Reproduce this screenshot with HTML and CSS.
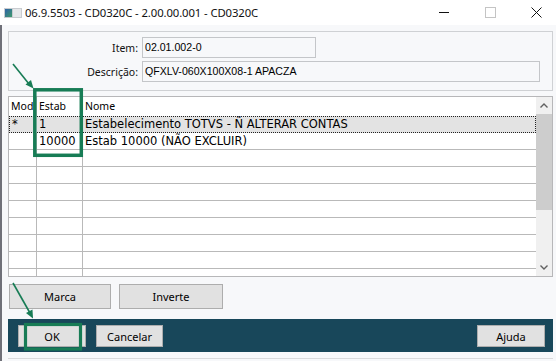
FILE: index.html
```html
<!DOCTYPE html>
<html lang="pt">
<head>
    <meta charset="UTF-8">
    <meta name="viewport" content="width=device-width, initial-scale=1.0">
    <title>CD0320C</title>
    <link rel="stylesheet" href="styles.css">
</head>
<body>
<div class="window">

    <!-- Title bar -->
    <div class="titlebar">
        <svg class="app-icon" width="18" height="10" viewBox="0 0 18 10">
            <defs>
                <linearGradient id="ig" x1="0" y1="0" x2="1" y2="1">
                    <stop offset="0" stop-color="#2f62a8"/>
                    <stop offset="1" stop-color="#3f9a6a"/>
                </linearGradient>
            </defs>
            <rect x="0" y="0" width="18" height="10" fill="#c9ccd0"/>
            <rect x="1" y="1" width="7" height="8" fill="url(#ig)"/>
            <rect x="9" y="1" width="8" height="8" fill="#e6e8ea"/>
        </svg>
        <span class="title">06.9.5503 - CD0320C - 2.00.00.001 - CD0320C</span>
        <div class="controls">
            <svg class="ctl-min" width="11" height="11" viewBox="0 0 11 11"><path d="M0 5.5H10" stroke="#111" stroke-width="1"/></svg>
            <svg class="ctl-max" width="11" height="11" viewBox="0 0 11 11"><rect x="0.5" y="0.5" width="10" height="10" fill="none" stroke="#c4c4c4"/></svg>
            <svg class="ctl-close" width="11" height="11" viewBox="0 0 11 11"><path d="M0.5 0.5L10.5 10.5M10.5 0.5L0.5 10.5" stroke="#111" stroke-width="1"/></svg>
        </div>
    </div>

    <div class="client">
        <!-- Item fields -->
        <div class="fields">
            <label class="field-label">Item:</label>
            <div class="input input-short">02.01.002-0</div>
            <label class="field-label">Descrição:</label>
            <div class="input input-long">QFXLV-060X100X08-1 APACZA</div>
        </div>

        <!-- Browse grid -->
        <div class="grid">
            <div class="grid-main">
                <div class="grid-row head">
                    <div class="cell mod">Mod</div>
                    <div class="cell estab">Estab</div>
                    <div class="cell nome">Nome</div>
                </div>
                <div class="grid-row selected">
                    <div class="cell mod">*</div>
                    <div class="cell estab">1</div>
                    <div class="cell nome">Estabelecimento TOTVS - Ñ ALTERAR CONTAS</div>
                </div>
                <div class="grid-row">
                    <div class="cell mod"></div>
                    <div class="cell estab">10000</div>
                    <div class="cell nome">Estab 10000 (NÃO EXCLUIR)</div>
                </div>
                <div class="grid-row"><div class="cell mod"></div><div class="cell estab"></div><div class="cell nome"></div></div>
                <div class="grid-row"><div class="cell mod"></div><div class="cell estab"></div><div class="cell nome"></div></div>
                <div class="grid-row"><div class="cell mod"></div><div class="cell estab"></div><div class="cell nome"></div></div>
                <div class="grid-row"><div class="cell mod"></div><div class="cell estab"></div><div class="cell nome"></div></div>
                <div class="grid-row"><div class="cell mod"></div><div class="cell estab"></div><div class="cell nome"></div></div>
                <div class="grid-row"><div class="cell mod"></div><div class="cell estab"></div><div class="cell nome"></div></div>
                <div class="grid-row"><div class="cell mod"></div><div class="cell estab"></div><div class="cell nome"></div></div>
                <div class="grid-row"><div class="cell mod"></div><div class="cell estab"></div><div class="cell nome"></div></div>
            </div>
            <div class="scrollbar">
                <div class="sb-arrow">
                    <svg width="8" height="5" viewBox="0 0 8 5"><path d="M0.5 4.5L4 1L7.5 4.5" fill="none" stroke="#606060" stroke-width="1.4"/></svg>
                </div>
                <div class="sb-thumb"></div>
                <div class="sb-track"></div>
                <div class="sb-arrow">
                    <svg width="8" height="5" viewBox="0 0 8 5"><path d="M0.5 0.5L4 4L7.5 0.5" fill="none" stroke="#606060" stroke-width="1.4"/></svg>
                </div>
            </div>
        </div>

        <!-- Selection buttons -->
        <div class="actions">
            <button class="btn btn-marca">Marca</button>
            <button class="btn btn-inverte">Inverte</button>
        </div>

        <!-- Dialog buttons -->
        <div class="footer">
            <button class="btn btn-dlg">OK</button>
            <button class="btn btn-dlg btn-cancel">Cancelar</button>
            <span class="spacer"></span>
            <button class="btn btn-dlg">Ajuda</button>
        </div>
        <div class="bottom-strip"></div>
    </div>

    <!-- Green highlight annotations drawn over the screenshot -->
    <svg class="annotations" width="556" height="361" viewBox="0 0 556 361">
        <g stroke="#177c55" fill="none">
            <rect x="34.8" y="89.8" width="46.5" height="65.5" stroke-width="3.5"/>
            <rect x="25.5" y="324.5" width="55" height="24.5" stroke-width="3.2"/>
            <path d="M13 64L29 84" stroke-width="1.6"/>
            <path d="M13 283L30 313" stroke-width="1.6"/>
        </g>
        <g fill="#177c55">
            <path d="M33.5 88.5L25.5 84.5L31 80Z"/>
            <path d="M33 318.5L26 313L32.5 309.5Z"/>
        </g>
    </svg>
</div>
</body>
</html>
```

FILE: styles.css
```css
body {
    margin: 0;
    padding: 0;
    background-color: #ffffff;
    font-family: "Noto Sans", sans-serif;
}
.window {
    position: relative;
    width: 556px;
    height: 361px;
    display: flex;
    flex-direction: column;
    overflow: hidden;
}
/* Title bar */
.titlebar {
    height: 25px;
    flex: none;
    display: flex;
    align-items: center;
    background-color: #ffffff;
}
.app-icon {
    margin-left: 4px;
    margin-top: 1px;
}
.title {
    margin-left: 3px;
    font-size: 11.3px;
    color: #111;
    letter-spacing: -0.1px;
}
.controls {
    margin-left: auto;
    display: flex;
    align-items: center;
}
.ctl-min {
    margin-right: 35px;
}
.ctl-max {
    margin-right: 35px;
}
.ctl-close {
    margin-right: 14px;
}
/* Client area */
.client {
    flex: 1;
    display: flex;
    flex-direction: column;
    background-color: #f7f8fa;
    border-left: 2px solid #6f7078;
    padding: 6px 3px 0 6px;
}
.fields {
    height: 60px;
    box-sizing: border-box;
    border: 1px solid #cfd1d4;
    display: grid;
    grid-template-columns: 129px auto;
    grid-template-rows: 21px 21px;
    column-gap: 4px;
    row-gap: 3px;
    padding-top: 5px;
    align-items: center;
}
.field-label {
    text-align: right;
    font-size: 10.5px;
    color: #111;
}
.input {
    height: 21px;
    box-sizing: border-box;
    border: 1px solid #c4c6c9;
    background-color: #f7f8fa;
    font-family: "Liberation Sans", sans-serif;
    font-size: 10.6px;
    line-height: 19px;
    padding-left: 2px;
    color: #000;
}
.input-short {
    width: 174px;
}
.input-long {
    width: 398px;
}
/* Grid */
.grid {
    margin-top: 5px;
    height: 181px;
    box-sizing: border-box;
    border: 1px solid #b7b7b9;
    background-color: #fff;
    display: flex;
}
.grid-main {
    flex: 1;
    overflow: hidden;
}
.grid-row {
    display: flex;
    height: 17px;
    box-sizing: border-box;
    border-bottom: 1px solid #b9b9b9;
    font-family: "DejaVu Sans", sans-serif;
    font-size: 11.5px;
    color: #000;
}
.grid-row.head {
    height: 19px;
    border-bottom: none;
    font-family: "Noto Sans", sans-serif;
    font-size: 10.5px;
}
.grid-row.selected {
    border: 1px dotted #222;
    background-color: #e3e3e3;
}
.cell {
    box-sizing: border-box;
    padding-left: 2px;
    line-height: 16px;
    white-space: nowrap;
    border-right: 1px solid #b9b9b9;
}
.head .cell {
    line-height: 19px;
}
.selected .cell {
    line-height: 15px;
    border-right-color: transparent;
}
.cell.mod {
    width: 28px;
}
.cell.estab {
    width: 46px;
}
.cell.nome {
    flex: 1;
    border-right: none;
}
.selected .cell.mod {
    width: 27px;
}
.scrollbar {
    width: 16px;
    background-color: #f0f0f0;
    display: flex;
    flex-direction: column;
}
.sb-arrow {
    height: 17px;
    display: flex;
    align-items: center;
    justify-content: center;
}
.sb-thumb {
    height: 96px;
    background-color: #cdcdcd;
}
.sb-track {
    flex: 1;
}
/* Buttons */
.btn {
    font-family: "Noto Sans", sans-serif;
    font-size: 11px;
    color: #000;
    background-color: #e1e1e1;
    border: 1px solid #adadad;
    padding: 0;
    margin: 0;
}
.actions {
    margin-top: 7px;
    margin-left: 1px;
    display: flex;
    gap: 8px;
}
.btn-marca {
    width: 102px;
    height: 25px;
}
.btn-inverte {
    width: 104px;
    height: 25px;
}
.footer {
    margin-top: 10px;
    height: 33px;
    box-sizing: border-box;
    background-color: #18475a;
    display: flex;
    align-items: flex-start;
    padding: 6px 8px 0 10px;
}
.btn-dlg {
    width: 68px;
    height: 22px;
}
.btn-cancel {
    width: 67px;
    margin-left: 10px;
}
.spacer {
    flex: 1;
}
.bottom-strip {
    height: 6px;
    border-bottom: 1px solid #d9dadc;
}
/* Annotation overlay */
.annotations {
    position: absolute;
    left: 0;
    top: 0;
    pointer-events: none;
}
```
